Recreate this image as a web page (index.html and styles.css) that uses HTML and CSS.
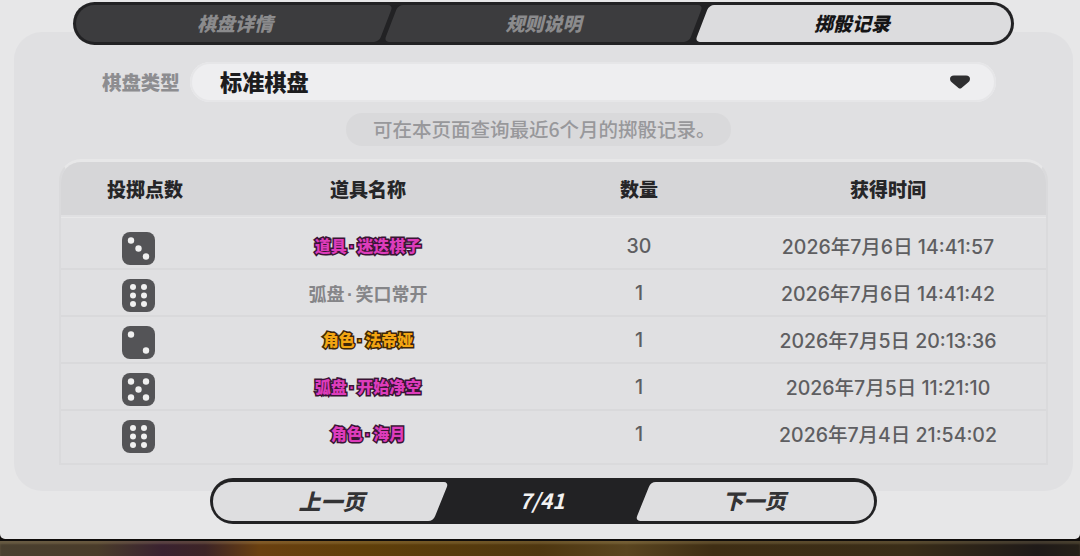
FILE: index.html
```html
<!DOCTYPE html>
<html lang="zh-CN">
<head>
<meta charset="utf-8">
<title>掷骰记录</title>
<link rel="stylesheet" href="styles.css">
</head>
<body>
<svg class="defs" width="0" height="0" aria-hidden="true">
  <symbol id="d2" viewBox="0 0 33 33"><rect width="33" height="33" rx="8" fill="#545457"/><g fill="#f0f0f0"><circle cx="9" cy="8.5" r="3.2"/><circle cx="24" cy="24.5" r="3.2"/></g></symbol>
  <symbol id="d3" viewBox="0 0 33 33"><rect width="33" height="33" rx="8" fill="#545457"/><g fill="#f0f0f0"><circle cx="9" cy="8.5" r="3.2"/><circle cx="16.5" cy="16.5" r="3.2"/><circle cx="24" cy="24.5" r="3.2"/></g></symbol>
  <symbol id="d5" viewBox="0 0 33 33"><rect width="33" height="33" rx="8" fill="#545457"/><g fill="#f0f0f0"><circle cx="9" cy="8.5" r="3.2"/><circle cx="24" cy="8.5" r="3.2"/><circle cx="16.5" cy="16.5" r="3.2"/><circle cx="9" cy="24.5" r="3.2"/><circle cx="24" cy="24.5" r="3.2"/></g></symbol>
  <symbol id="d6" viewBox="0 0 33 33"><rect width="33" height="33" rx="8" fill="#545457"/><g fill="#f0f0f0"><circle cx="11" cy="8" r="3"/><circle cx="22" cy="8" r="3"/><circle cx="11" cy="16.5" r="3"/><circle cx="22" cy="16.5" r="3"/><circle cx="11" cy="25" r="3"/><circle cx="22" cy="25" r="3"/></g></symbol>
</svg>
<div class="screen">
  <nav class="tabs">
    <div class="tabs-inner">
      <div class="tab tab-first"><span>棋盘详情</span></div>
      <div class="tab tab-mid"><span>规则说明</span></div>
      <div class="tab tab-last active"><span>掷骰记录</span></div>
    </div>
  </nav>
  <section class="panel">
    <div class="filter">
      <div class="filter-label">棋盘类型</div>
      <div class="select">
        <span class="select-value">标准棋盘</span>
        <svg class="select-arrow" width="20" height="14" viewBox="0 0 20 14"><path d="M4 .5H16Q20 .5 20 4Q20 6 18 7.5L11.5 13Q10 14 8.500 13L2 7.500Q0 6 0 4Q0 .5 4 .5Z" fill="#2e2e30"/></svg>
      </div>
    </div>
    <div class="note-wrap"><div class="note">可在本页面查询最近6个月的掷骰记录。</div></div>
    <div class="table">
      <div class="thead">
        <div>投掷点数</div><div>道具名称</div><div>数量</div><div>获得时间</div>
      </div>
      <div class="tbody">
        <div class="row">
          <div class="die"><svg width="33" height="33"><use href="#d3"/></svg></div>
          <div class="item magenta">道具<span class="dot">·</span>迷迭棋子</div>
          <div class="cell">30</div>
          <div class="cell">2026年7月6日 14:41:57</div>
        </div>
        <div class="row">
          <div class="die"><svg width="33" height="33"><use href="#d6"/></svg></div>
          <div class="plain">弧盘<span class="dot">·</span>笑口常开</div>
          <div class="cell">1</div>
          <div class="cell">2026年7月6日 14:41:42</div>
        </div>
        <div class="row">
          <div class="die"><svg width="33" height="33"><use href="#d2"/></svg></div>
          <div class="item orange">角色<span class="dot">·</span>法帝娅</div>
          <div class="cell">1</div>
          <div class="cell">2026年7月5日 20:13:36</div>
        </div>
        <div class="row">
          <div class="die"><svg width="33" height="33"><use href="#d5"/></svg></div>
          <div class="item magenta">弧盘<span class="dot">·</span>开始净空</div>
          <div class="cell">1</div>
          <div class="cell">2026年7月5日 11:21:10</div>
        </div>
        <div class="row">
          <div class="die"><svg width="33" height="33"><use href="#d6"/></svg></div>
          <div class="item magenta">角色<span class="dot">·</span>海月</div>
          <div class="cell">1</div>
          <div class="cell">2026年7月4日 21:54:02</div>
        </div>
      </div>
    </div>
  </section>
  <div class="pager">
    <div class="pager-inner">
      <div class="pbtn pbtn-prev"><span>上一页</span></div>
      <div class="page-count">7/41</div>
      <div class="pbtn pbtn-next"><span>下一页</span></div>
    </div>
  </div>
</div>
<div class="strip"></div>
</body>
</html>
```
FILE: styles.css
```css
* { box-sizing: border-box; }
html, body { margin: 0; padding: 0; }
body {
  width: 1080px;
  height: 556px;
  overflow: hidden;
  background: #0f0c0a;
  font-family: "Noto Sans CJK SC", "Noto Sans", sans-serif;
}
.defs { display: block; height: 0; }

.screen {
  height: 539px;
  padding-top: 2px;
  background: #e7e7e8;
  border-radius: 0 0 5px 5px;
  display: flex;
  flex-direction: column;
}

/* Tabs */
.tabs {
  position: relative;
  z-index: 2;
  width: 941px;
  height: 43px;
  margin-left: 73px;
  padding: 3px;
  background: #222224;
  border-radius: 22px;
}
.tabs-inner {
  height: 37px;
  display: flex;
  overflow: hidden;
  border-radius: 19px;
}
.tab {
  position: relative;
  isolation: isolate;
  display: flex;
  align-items: center;
  justify-content: center;
  padding-bottom: 3px;
  font-size: 19px;
  font-weight: 900;
  font-style: italic;
  color: #8b8b8d;
}
.tab::before {
  content: "";
  position: absolute;
  inset: 0;
  z-index: -1;
  background: #3c3c3e;
  border-radius: 5px;
  transform: skewX(-21deg);
}
.tab-first { width: 310px; margin-right: 5px; padding-left: 8px; }
.tab-first::before { left: -40px; }
.tab-mid { width: 305px; margin-right: 6px; }
.tab-last { width: 306px; padding-right: 6px; }
.tab-last::before { right: -40px; }
.tab.active { color: #151516; }
.tab.active::before { background: #dcdcde; }

/* Panel */
.panel {
  position: relative;
  z-index: 1;
  width: 1059px;
  height: 459px;
  margin-top: -13px;
  margin-left: 14px;
  padding-top: 30px;
  background: #e0e0e2;
  border-radius: 28px;
}
.filter {
  display: flex;
  align-items: center;
  height: 40px;
  padding-left: 88px;
}
.filter-label {
  width: 88px;
  font-size: 19.4px;
  line-height: 28px;
  font-weight: 900;
  color: #8d8d90;
  white-space: nowrap;
}
.select {
  width: 806px;
  height: 40px;
  padding: 0 26px 3px 30px;
  display: flex;
  align-items: center;
  justify-content: space-between;
  background: #eeeef0;
  border-radius: 20px;
  box-shadow: inset 0 0 0 2px #e6e6e8;
}
.select-value {
  font-size: 22.2px;
  font-weight: 900;
  color: #1c1c1e;
}
.select-arrow { display: block; margin-top: 2px; }
.note-wrap {
  display: flex;
  margin-top: 11px;
  padding-left: 332px;
}
.note {
  width: 385px;
  height: 33px;
  padding-left: 27px;
  border-radius: 16px;
  background: #d9d9db;
  font-size: 19.5px;
  line-height: 32px;
  font-weight: 500;
  color: #98989b;
  white-space: nowrap;
}

/* Table */
.table {
  width: 989px;
  height: 306px;
  margin-top: 13px;
  margin-left: 45px;
  border: 2px solid #dadadc;
  border-top: 3px solid #e7e7e8;
  border-radius: 22px 22px 0 0;
}
.thead, .row {
  display: grid;
  grid-template-columns: 168px 278px 264px 234px;
  justify-items: center;
  align-items: center;
  width: 985px;
}
.thead {
  height: 53px;
  background: #d6d6d8;
  border-radius: 20px 20px 0 0;
  font-size: 19px;
  font-weight: 900;
  color: #262628;
}
.tbody { padding-top: 5px; border-top: 1px solid #e8e8e9; margin-top: 2px; }
.row {
  height: 47px;
  border-bottom: 2px solid #d9d9db;
}
.row:last-child { border-bottom-color: transparent; }
.die { height: 33px; margin-top: 6px; margin-left: -13px; }
.die svg { display: block; }
.cell {
  font-family: Inter, "Noto Sans CJK SC", sans-serif;
  font-size: 19.5px;
  font-weight: 500;
  color: #5e5e61;
  white-space: nowrap;
}
.item {
  margin-bottom: 2px;
  font-size: 16px;
  font-weight: 900;
  white-space: nowrap;
  paint-order: stroke fill;
}
.dot {
  padding: 0 2.5px;
  font-family: "Liberation Sans", sans-serif;
  font-weight: 700;
}
.plain { font-size: 18px; font-weight: 700; color: #858588; white-space: nowrap; }
.magenta { color: #dd3cbb; -webkit-text-stroke: 3px #3a1535; }
.orange { color: #f2a512; -webkit-text-stroke: 3px #3d2608; }

/* Pager */
.pager {
  position: relative;
  z-index: 2;
  width: 667px;
  height: 46px;
  margin-top: -13px;
  margin-left: 210px;
  padding: 4px 3px 3px;
  background: #222224;
  border-radius: 23px;
}
.pager-inner {
  height: 39px;
  display: flex;
  align-items: stretch;
  overflow: hidden;
  border-radius: 19px;
}
.pbtn {
  position: relative;
  isolation: isolate;
  width: 228px;
  display: flex;
  align-items: center;
  justify-content: center;
  padding-bottom: 3px;
  font-size: 22px;
  font-weight: 900;
  font-style: italic;
  color: #333335;
}
.pbtn::before {
  content: "";
  position: absolute;
  inset: 0;
  z-index: -1;
  background: #dedee0;
  border-radius: 5px;
  transform: skewX(-22deg);
}
.pbtn-prev { padding-left: 9px; }
.pbtn-prev::before { left: -40px; }
.pbtn-next { width: 231px; padding-right: 9px; font-size: 21px; }
.pbtn-next::before { right: -40px; }
.page-count {
  flex: 1;
  display: flex;
  align-items: center;
  justify-content: center;
  padding-bottom: 3px;
  font-size: 21px;
  font-weight: 700;
  font-style: italic;
  color: #f2f2f2;
}

/* Bottom strip */
.strip {
  height: 15px;
  margin-top: 2px;
  background: linear-gradient(90deg, #4a4030 0, #4a3c2a 9%, #3a2230 15%, #3d2426 19%, #6a4010 24%, #5f3f0a 34%, #4f3710 50%, #5a4520 58%, #3f2e14 66%, #3a2d18 84%, #1f1a18 96%, #262018 100%);
  box-shadow: inset 0 3px 2px rgba(255, 230, 170, .16);
}
```
